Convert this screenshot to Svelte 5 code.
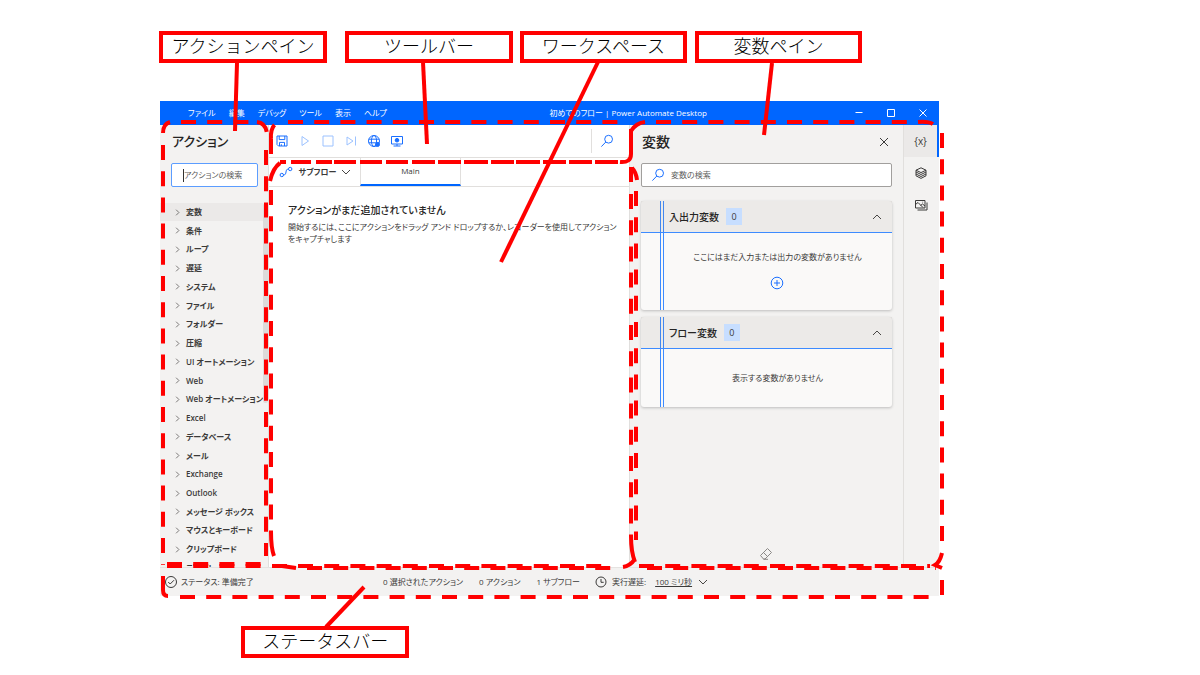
<script>
  const menus = ['ファイル', '編集', 'デバッグ', 'ツール', '表示', 'ヘルプ'];

  const groups = [
    '変数', '条件', 'ループ', '遅延', 'システム', 'ファイル', 'フォルダー', '圧縮',
    'UI オートメーション', 'Web', 'Web オートメーション', 'Excel', 'データベース',
    'メール', 'Exchange', 'Outlook', 'メッセージ ボックス', 'マウスとキーボード',
    'クリップボード', 'テキスト'
  ];

  const callouts = ['アクションペイン', 'ツールバー', 'ワークスペース', '変数ペイン'];

  // Dashed frames round each region, one path per edge
  const frames = [
    // actions pane
    'M163 145V565', 'M163 133Q163 124 170 122', 'M181 122H250', 'M257 122Q266 123 267 134',
    'M266 150V556', 'M167 564H262', 'M167 566H262',
    // toolbar
    'M271 139Q270 125 279 122', 'M288 122H625', 'M271 139V155',
    // workspace
    'M271 190V532', 'M298 566H612', 'M307 568H612', 'M272 566H287', 'M282 566L296 568',
    // variables pane
    'M656 122H910', 'M918 122Q930 121 934 125', 'M636 191V540',
    'M942 133V545', 'M639 566H930', 'M647 568H936',
    'M631 194V536',
    // status bar
    'M180 597H932', 'M942 580V596'
  ];

  const solids = [
    'M163 576V590Q163 596 168 596',
    'M270 181Q273 168 280 163',
    'M280 162H286M291 162H311M316 162H332M334 162H356M360 162H382M386 162H408M412 162H435M438 162H461M464 162H488M491 162H514M516 162H540M543 162H566M569 162H592M595 162H618',
    'M620 162Q631 163 631 154V129',
    'M631 131Q636 123 645 122',
    'M631 167V182M632 168Q636 172 637 180',
    'M271 532Q271 548 274 556',
    'M631 536Q631 552 635 562M635 559Q630 566 623 567',
    'M942 553Q940 562 935 565L942 568'
  ];

  const leaders = ['M237 63L235 131', 'M423 62L427 144', 'M598 62L501 262', 'M772 63L764 135', 'M326 627L364 587'];
</script>

{#snippet chevron(dir)}
  <svg class="chevron {dir}" viewBox="0 0 10 10"><path d="M1 3l4 4 4-4" /></svg>
{/snippet}

{#snippet lens()}
  <svg class="icon blue" viewBox="0 0 14 14"><circle cx="8.6" cy="5.2" r="3.9" /><path d="M5.8 8L1.4 12.6" /></svg>
{/snippet}

<main class="page">
  <div class="callouts">
    {#each callouts as label}
      <div class="callout">{label}</div>
    {/each}
  </div>

  <div class="window">
    <header class="titlebar">
      <nav>
        {#each menus as menu}
          <button>{menu}</button>
        {/each}
      </nav>
      <span class="title">初めてのフロー | Power Automate Desktop</span>
      <div class="controls">
        <button aria-label="最小化"><svg viewBox="0 0 10 10"><path d="M1.500 4.500h7" /></svg></button>
        <button aria-label="最大化"><svg viewBox="0 0 10 10"><path d="M1.500 1.500h7v7h-7z" /></svg></button>
        <button aria-label="閉じる"><svg viewBox="0 0 10 10"><path d="M1.500 1.500l7 7M8.500 1.500l-7 7" /></svg></button>
      </div>
    </header>

    <div class="panes">
      <aside class="actions">
        <h2>アクション</h2>
        <label class="search focused">
          <span class="caret"></span>
          <input type="text" placeholder="アクションの検索" aria-label="アクションの検索" />
        </label>
        <div class="scroller">
          <ul>
            {#each groups as group, i}
              <li class:selected={i === 0}>{@render chevron('right')}{group}</li>
            {/each}
          </ul>
          <span class="thumb"></span>
        </div>
      </aside>

      <section class="main">
        <div class="toolbar">
          <button aria-label="保存">
            <svg class="icon blue" viewBox="0 0 14 14"><path d="M2 2h10v10H3.500L2 10.500zM4.200 2v3.600h5.600V2M4.500 12V8.400h5V12M6.300 12v-1.800" /></svg>
          </button>
          <button aria-label="実行" class="faded">
            <svg class="icon blue" viewBox="0 0 14 14"><path d="M4 2.500l6.500 4.500L4 11.500z" /></svg>
          </button>
          <button aria-label="停止" class="faded">
            <svg class="icon blue" viewBox="0 0 14 14"><path d="M2 2h10v10H2z" /></svg>
          </button>
          <button aria-label="次のアクションを実行" class="faded">
            <svg class="icon blue" viewBox="0 0 14 14"><path d="M3 3l6 4-6 4zM11.500 2.500v9" /></svg>
          </button>
          <button aria-label="Web レコーダー">
            <svg class="icon blue" viewBox="0 0 14 14">
              <circle cx="7" cy="7" r="5.500" /><ellipse cx="7" cy="7" rx="2.600" ry="5.500" />
              <path d="M1.800 5.200h10.400M1.800 8.800h10.400" /><circle class="dot" cx="10.500" cy="10.500" r="2" />
            </svg>
          </button>
          <button aria-label="デスクトップ レコーダー">
            <svg class="icon blue" viewBox="0 0 14 14">
              <path d="M1.500 2.500h11v7.500h-11zM3.500 12h7M7 10v2" /><circle class="dot" cx="7" cy="6.200" r="1.800" />
            </svg>
          </button>
          <button aria-label="フロー内を検索" class="find">{@render lens()}</button>
        </div>

        <div class="tabs">
          <button class="subflow">
            <svg class="icon blue" viewBox="0 0 14 14"><circle cx="2.800" cy="10" r="1.700" /><circle cx="11.200" cy="4" r="1.700" /><path d="M4.600 10C8.500 10 5.500 4 9.400 4" /></svg>
            サブフロー
            {@render chevron('down')}
          </button>
          <button class="tab">Main</button>
        </div>

        <div class="empty">
          <h3>アクションがまだ追加されていません</h3>
          <p>開始するには、ここにアクションをドラッグ アンド ドロップするか、レコーダーを使用してアクションをキャプチャします</p>
        </div>
      </section>

      <section class="variables">
        <div class="heading">
          <h2>変数</h2>
          <button aria-label="閉じる"><svg class="icon" viewBox="0 0 14 14"><path d="M3 3l8 8M11 3l-8 8" /></svg></button>
        </div>
        <label class="search">
          {@render lens()}
          <input type="text" placeholder="変数の検索" aria-label="変数の検索" />
        </label>

        <article class="card">
          <header><h3>入出力変数</h3><span class="count">0</span>{@render chevron('up')}</header>
          <div class="body io">
            <p>ここにはまだ入力または出力の変数がありません</p>
            <button aria-label="変数の追加">
              <svg class="icon blue" viewBox="0 0 14 14"><circle cx="7" cy="7" r="5.800" /><path d="M7 4v6M4 7h6" /></svg>
            </button>
          </div>
        </article>

        <article class="card">
          <header><h3>フロー変数</h3><span class="count">0</span>{@render chevron('up')}</header>
          <div class="body"><p>表示する変数がありません</p></div>
        </article>

        <button class="eraser" aria-label="値の消去">
          <svg class="icon" viewBox="0 0 14 14"><path d="M1.500 8.500L8.500 1.500l4 4L6 12H4.500zM4.500 5.500l4 4M4.500 12.300H9" /></svg>
        </button>
      </section>

      <aside class="rail">
        <button class="active" aria-label="変数">{'{x}'}</button>
        <button aria-label="UI 要素">
          <svg class="icon" viewBox="0 0 14 14"><path d="M7 1.800l5 2.400-5 2.400-5-2.400zM2 4.200v5.600l5 2.600 5-2.600V4.200M2 6l5 2.500L12 6M2 8l5 2.500L12 8" /></svg>
        </button>
        <button aria-label="画像">
          <svg class="icon" viewBox="0 0 14 14"><path d="M1.500 2.500h9.500v7.500h-9.500zM3.500 12h9.500V4.500M1.500 6.500l2.500-2 5 5M6.500 7.500l2-1.500 2.500 2M8.500 4.200h.6" /></svg>
        </button>
      </aside>
    </div>

    <footer class="status">
      <span class="state">
        <svg class="icon" viewBox="0 0 14 14"><circle cx="7" cy="7" r="5.500" /><path d="M4.200 7l2 2 3.800-3.800" /></svg>
        ステータス: 準備完了
      </span>
      <span>0 選択されたアクション</span>
      <span>0 アクション</span>
      <span>1 サブフロー</span>
      <span class="delay">
        <svg class="icon" viewBox="0 0 14 14"><circle cx="7" cy="7" r="5" /><path d="M7 4V7.300h2.700" /></svg>
        実行遅延:
        <button><u>100 ミリ秒</u>{@render chevron('down')}</button>
      </span>
    </footer>
  </div>

  <div class="callouts below">
    <div class="callout">ステータスバー</div>
  </div>

  <svg class="marks" viewBox="0 0 1200 675" preserveAspectRatio="none" aria-hidden="true">
    {#each frames as d}
      <path class="dashed" {d} />
    {/each}
    {#each solids as d}
      <path {d} />
    {/each}
    {#each leaders as d}
      <path {d} />
    {/each}
  </svg>
</main>

<style>
  :global(body) {
    background: #fff;
  }
  .page {
    position: relative;
    box-sizing: border-box;
    min-height: 100vh;
    padding: 31px 0 17px;
    display: flex;
    flex-direction: column;
    font-family: "Open Sans", "Noto Sans CJK JP", sans-serif;
    font-size: 8px;
    line-height: 12px;
    font-feature-settings: "palt";
    color: #3b3a39;
  }
  button {
    font: inherit;
    font-feature-settings: inherit;
    color: inherit;
    background: none;
    border: 0;
    padding: 0;
    display: flex;
    align-items: center;
    justify-content: center;
  }
  h2, h3, p, ul {
    margin: 0;
    padding: 0;
  }
  h2 {
    font-size: 14px;
    line-height: 20px;
    font-weight: 500;
    color: #252423;
  }
  svg {
    fill: none;
    stroke: currentColor;
    flex: none;
  }
  .icon {
    width: 14px;
    height: 14px;
  }
  .blue {
    color: #1a6fff;
  }
  .faded .blue {
    color: #9cc2ff;
  }
  .dot {
    fill: currentColor;
  }
  .chevron {
    width: 10px;
    height: 10px;
    color: #484644;
  }
  .chevron.up {
    transform: rotate(180deg);
  }
  .chevron.right {
    width: 7px;
    height: 7px;
    transform: rotate(-90deg);
  }

  .callouts {
    display: grid;
    grid-template-columns: 168fr 18fr 168fr 7fr 167fr 8fr 167fr;
    margin: 0 28.17% 38px 13.25%;
  }
  .callout {
    box-sizing: border-box;
    height: 32px;
    border: 4px solid #f00;
    text-align: center;
    font-family: "Noto Sans CJK JP", sans-serif;
    font-feature-settings: normal;
    font-weight: 300;
    font-size: 18px;
    line-height: 20px;
    white-space: nowrap;
    color: #000;
  }
  .callout:nth-child(2) { grid-column: 3; }
  .callout:nth-child(3) { grid-column: 5; }
  .callout:nth-child(4) { grid-column: 7; }
  .below {
    display: block;
    margin: 30px 65.9% 0 20.1%;
  }

  .window {
    flex: 1;
    display: flex;
    flex-direction: column;
    margin: 0 21.75% 0 13.33%;
    background: #f3f2f1;
  }
  .titlebar {
    display: grid;
    grid-template-columns: 50% 1fr auto;
    align-items: center;
    height: 24px;
    background: #0066ff;
    color: #fff;
  }
  nav {
    display: flex;
    gap: 13px;
    padding-left: 28px;
  }
  .controls {
    display: flex;
  }
  .controls button {
    width: 32px;
    height: 24px;
  }
  .controls svg {
    width: 10px;
    height: 10px;
  }

  .panes {
    flex: 1;
    display: grid;
    grid-template-columns: minmax(0, 108fr) minmax(0, 362fr) minmax(0, 273fr) minmax(0, 36fr);
  }
  .actions {
    display: flex;
    flex-direction: column;
  }
  .actions h2 {
    padding: 6px 12px 0;
    font-size: 13px;
  }
  .search {
    display: flex;
    align-items: center;
    box-sizing: border-box;
    height: 24px;
    border: 1px solid #a19f9d;
    border-radius: 2px;
    background: #fff;
  }
  .search .icon {
    margin: 0 6px 0 9px;
  }
  .search input {
    flex: 1;
    min-width: 0;
    border: 0;
    padding: 0;
    outline: 0;
    background: none;
    font: inherit;
    font-feature-settings: inherit;
  }
  .search input::placeholder {
    color: #605e5c;
  }
  .focused {
    margin: 12px 10px 16px 11px;
    border-color: #5c9dff;
    padding-left: 11px;
  }
  .caret {
    width: 1px;
    height: 13px;
    background: #323130;
  }
  .scroller {
    flex: 1 1 0;
    min-height: 0;
    display: flex;
    overflow: hidden;
  }
  .scroller ul {
    flex: 1;
    min-width: 0;
    display: flex;
    flex-direction: column;
    justify-content: space-between;
    margin-bottom: -10px;
    list-style: none;
    font-weight: 600;
  }
  .scroller li {
    display: flex;
    align-items: center;
    gap: 5px;
    height: 18px;
    padding-left: 14px;
    white-space: nowrap;
  }
  .scroller li.selected {
    background: #ebe9e8;
  }
  .thumb {
    width: 5px;
    height: 200px;
    border-radius: 3px;
    background: #dddbda;
  }

  .main {
    background: #fff;
    border-left: 1px solid #e1dfdd;
    border-right: 1px solid #e1dfdd;
  }
  .toolbar {
    display: flex;
    align-items: center;
    gap: 9px;
    height: 32px;
    padding-left: 6px;
    border-bottom: 1px solid #e1dfdd;
  }
  .find {
    margin-left: auto;
    width: 38px;
    height: 24px;
    padding-right: 6px;
    border-left: 1px solid #e1dfdd;
  }
  .tabs {
    display: flex;
    height: 28px;
    border-bottom: 1px solid #e1dfdd;
  }
  .subflow {
    width: 91px;
    gap: 5px;
    padding-left: 2px;
    font-weight: 600;
    white-space: nowrap;
  }
  .tab {
    width: 101px;
    border: solid #e1dfdd;
    border-width: 0 1px;
    border-bottom: 2px solid #0066ff;
  }
  .empty {
    padding: 15px 8px 0 19px;
  }
  .empty h3 {
    font-size: 10px;
    line-height: 16px;
    font-weight: 500;
    color: #252423;
  }
  .empty p {
    margin-top: 3px;
  }

  .variables {
    display: flex;
    flex-direction: column;
    padding: 0 11px 6px;
  }
  .heading {
    display: flex;
    justify-content: space-between;
    padding: 7px 1px 11px;
  }
  .card {
    margin-top: 7px;
    border-radius: 3px;
    background:
      linear-gradient(#3d8bff, #3d8bff) 19px 0 / 1px 100% no-repeat,
      linear-gradient(#3d8bff, #3d8bff) 22px 0 / 1px 100% no-repeat,
      #faf9f8;
    box-shadow: 0 1px 3px rgba(0, 0, 0, 0.22);
  }
  .search + .card {
    margin-top: 14px;
  }
  .card header {
    display: flex;
    align-items: center;
    gap: 7px;
    height: 31px;
    padding: 0 10px 0 28px;
    border-bottom: 1px solid #3d8bff;
    background: rgba(120, 110, 100, 0.1);
  }
  .card h3 {
    font-size: 10px;
    font-weight: 500;
    color: #252423;
  }
  .card .chevron {
    margin-left: auto;
  }
  .count {
    width: 16px;
    font-size: 9px;
    line-height: 17px;
    text-align: center;
    background: #c7deff;
  }
  .body {
    display: flex;
    flex-direction: column;
    align-items: center;
    padding: 23px 0 23px 22px;
  }
  .io {
    gap: 13px;
    padding: 18px 0 20px 22px;
  }
  .eraser {
    margin: auto auto 0;
    color: #8a8886;
  }

  .rail {
    display: flex;
    flex-direction: column;
    border-left: 1px solid #e1dfdd;
  }
  .rail button {
    height: 32px;
  }
  .rail .active {
    background: #ebe9e8;
    border-right: 2px solid #0066ff;
    font-size: 10px;
  }

  .status {
    display: flex;
    align-items: center;
    gap: 16px;
    height: 29px;
    border-top: 1px solid #e5e3e1;
    box-sizing: border-box;
    padding-left: 4px;
    white-space: nowrap;
  }
  .state {
    flex: 0 0 26.2%;
    display: flex;
    align-items: center;
    gap: 3px;
  }
  .delay {
    display: flex;
    align-items: center;
    gap: 4px;
    margin-left: -2px;
  }
  .delay button {
    gap: 6px;
    margin-left: 5px;
  }

  .marks {
    position: absolute;
    inset: 0;
    width: 100%;
    height: 100%;
    pointer-events: none;
    stroke: #f00;
    stroke-width: 4;
  }
  .dashed {
    stroke-dasharray: 15 11.2;
  }
</style>
